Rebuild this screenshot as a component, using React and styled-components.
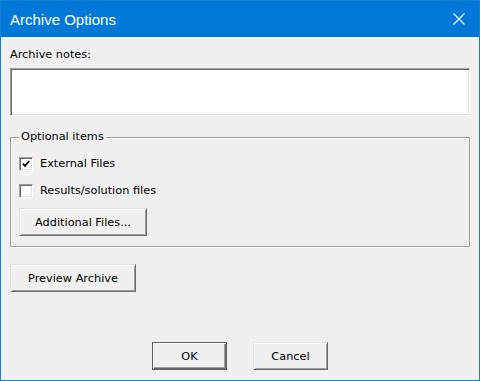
import React, { useState } from 'react';
import styled, { createGlobalStyle } from 'styled-components';

const GlobalStyle = createGlobalStyle`
  html, body {
    margin: 0;
    padding: 0;
    background: #f0f0f0;
  }
  * {
    box-sizing: border-box;
  }
`;

const uiFont = `'DejaVu Sans', Tahoma, Verdana, sans-serif`;

const Window = styled.div`
  width: 480px;
  height: 381px;
  display: flex;
  flex-direction: column;
  border: 1px solid #1a7dd4;
  background: #f0f0f0;
  font-family: ${uiFont};
  font-size: 11.3px;
  color: #000;
`;

const TitleBar = styled.div`
  height: 36px;
  flex-shrink: 0;
  display: flex;
  align-items: center;
  justify-content: space-between;
  padding: 0 14px 0 9px;
  background: #0078d7;
  color: #fff;
`;

const Title = styled.span`
  font-family: 'Liberation Sans', Arial, sans-serif;
  font-size: 15px;
  padding-top: 1px;
`;

const CloseIcon = styled.svg`
  width: 12px;
  height: 12px;
  display: block;
`;

const Body = styled.div`
  flex: 1;
  display: flex;
  flex-direction: column;
  padding: 11px 9px 10px;
`;

const FieldLabel = styled.label`
  line-height: 14px;
`;

const NotesBox = styled.textarea`
  margin-top: 6px;
  height: 48px;
  width: 100%;
  resize: none;
  background: #fff;
  border: 1px solid;
  border-color: #a0a0a0 #ffffff #ffffff #a0a0a0;
  box-shadow: inset 1px 1px 0 #696969, inset -1px -1px 0 #e3e3e3;
  font: inherit;
  outline: none;
`;

const Group = styled.div`
  position: relative;
  margin-top: 21px;
  padding: 12px 8px 10px;
  border: 1px solid #a0a0a0;
  box-shadow: inset 1px 1px 0 #fff, 1px 1px 0 #fff;
  display: flex;
  flex-direction: column;
  align-items: flex-start;
`;

const GroupCaption = styled.span`
  position: absolute;
  top: -8px;
  left: 8px;
  padding: 0 2px;
  line-height: 14px;
  background: #f0f0f0;
`;

const CheckRow = styled.label`
  height: 27px;
  display: flex;
  align-items: center;
  gap: 7px;
`;

const Box = styled.span`
  width: 14px;
  height: 14px;
  flex-shrink: 0;
  display: flex;
  align-items: center;
  justify-content: center;
  background: #fff;
  border: 1px solid;
  border-color: #a0a0a0 #ffffff #ffffff #a0a0a0;
  box-shadow: inset 1px 1px 0 #696969, inset -1px -1px 0 #e3e3e3;
`;

const CheckText = styled.span`
  white-space: nowrap;
`;

const Button = styled.button`
  width: ${p => p.$w}px;
  height: 28px;
  margin-top: ${p => p.$mt || 0}px;
  padding: 0;
  font: inherit;
  color: #000;
  background: #f0f0f0;
  border: 1px solid;
  border-color: ${p =>
    p.$default ? '#646464' : '#e3e3e3 #696969 #696969 #e3e3e3'};
  box-shadow: ${p =>
    p.$default
      ? 'inset 1px 1px 0 #fff, inset -1px -1px 0 #696969, inset -2px -2px 0 #a0a0a0'
      : 'inset 1px 1px 0 #fff, inset -1px -1px 0 #a0a0a0'};
  flex-shrink: 0;
`;

const Spacer = styled.div`
  flex: 1;
`;

const Footer = styled.div`
  display: flex;
  justify-content: center;
  gap: 26px;
`;

function CheckBox({ checked, onToggle, children }) {
  return (
    <CheckRow onClick={onToggle}>
      <Box>
        {checked && (
          <svg width="8" height="8" viewBox="0 0 8 8">
            <path d="M0.8 3.6 L3 5.9 L7.3 1" fill="none" stroke="#000" strokeWidth="1.7" />
          </svg>
        )}
      </Box>
      <CheckText>{children}</CheckText>
    </CheckRow>
  );
}

export default function App() {
  const [external, setExternal] = useState(true);
  const [results, setResults] = useState(false);

  return (
    <>
      <GlobalStyle />
      <Window>
        <TitleBar>
          <Title>Archive Options</Title>
          <CloseIcon viewBox="0 0 12 12">
            <path d="M0.5 0.5 L11.5 11.5 M11.5 0.5 L0.5 11.5" stroke="#fff" strokeWidth="1.1" fill="none" />
          </CloseIcon>
        </TitleBar>
        <Body>
          <FieldLabel>Archive notes:</FieldLabel>
          <NotesBox />
          <Group>
            <GroupCaption>Optional items</GroupCaption>
            <CheckBox checked={external} onToggle={() => setExternal(!external)}>
              External Files
            </CheckBox>
            <CheckBox checked={results} onToggle={() => setResults(!results)}>
              Results/solution files
            </CheckBox>
            <Button $w={128} $mt={4}>Additional Files...</Button>
          </Group>
          <Button $w={126} $mt={17}>Preview Archive</Button>
          <Spacer />
          <Footer>
            <Button $w={75} $default>OK</Button>
            <Button $w={75}>Cancel</Button>
          </Footer>
        </Body>
      </Window>
    </>
  );
}
